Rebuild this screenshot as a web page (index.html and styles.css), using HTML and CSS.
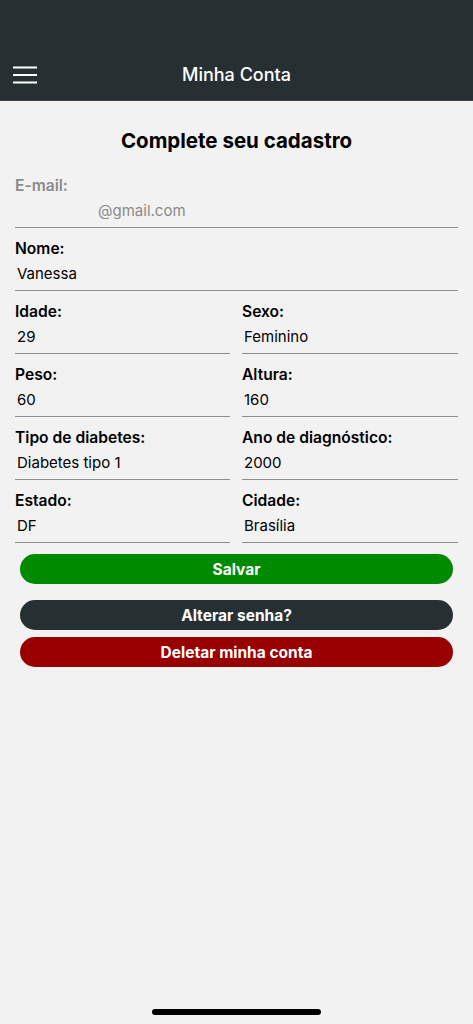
FILE: index.html
```html
<!DOCTYPE html>
<html lang="pt-BR">
<head>
<meta charset="utf-8">
<title>Minha Conta</title>
<link rel="stylesheet" href="styles.css">
</head>
<body>
<header class="topbar">
  <div class="topbar-row">
    <button class="menu-btn" aria-label="Menu">
      <svg width="24" height="18" viewBox="0 0 24 18"><path d="M0 1.5H24M0 9H24M0 16.5H24" stroke="#fff" stroke-width="2.2" stroke-linecap="round" fill="none"/></svg>
    </button>
    <h1 class="topbar-title">Minha Conta</h1>
  </div>
</header>
<main class="form">
  <h2 class="form-title">Complete seu cadastro</h2>
  <div class="field disabled">
    <div class="label">E-mail:</div>
    <div class="value email">@gmail.com</div>
  </div>
  <div class="field">
    <div class="label">Nome:</div>
    <div class="value">Vanessa</div>
  </div>
  <div class="grid">
    <div class="field"><div class="label">Idade:</div><div class="value">29</div></div>
    <div class="field"><div class="label">Sexo:</div><div class="value">Feminino</div></div>
    <div class="field"><div class="label">Peso:</div><div class="value">60</div></div>
    <div class="field"><div class="label">Altura:</div><div class="value">160</div></div>
    <div class="field"><div class="label">Tipo de diabetes:</div><div class="value">Diabetes tipo 1</div></div>
    <div class="field"><div class="label">Ano de diagnóstico:</div><div class="value">2000</div></div>
    <div class="field"><div class="label">Estado:</div><div class="value">DF</div></div>
    <div class="field"><div class="label">Cidade:</div><div class="value">Brasília</div></div>
  </div>
  <div class="actions">
    <button class="btn btn-save">Salvar</button>
    <div class="secondary">
      <button class="btn btn-dark">Alterar senha?</button>
      <button class="btn btn-danger">Deletar minha conta</button>
    </div>
  </div>
</main>
<div class="home-indicator"></div>
</body>
</html>
```
FILE: styles.css
```css
* { box-sizing: border-box; }
html, body { margin: 0; padding: 0; }
body {
  background: #f2f2f2;
  font-family: Inter, "Noto Sans", "Liberation Sans", sans-serif;
  color: #000;
  width: 473px;
  min-height: 1024px;
}
.topbar {
  height: 101px;
  background: #263033;
  border-bottom: 1px solid #3c4548;
  display: flex;
  align-items: flex-end;
}
.topbar-row {
  height: 44px;
  width: 100%;
  margin-bottom: 3px;
  display: flex;
  align-items: center;
  justify-content: center;
  position: relative;
}
.menu-btn {
  position: absolute;
  left: 13px;
  top: 13px;
  width: 24px;
  height: 18px;
  padding: 0;
  border: 0;
  background: none;
  display: block;
}
.menu-btn svg { display: block; }
.topbar-title {
  margin: 0;
  color: #fff;
  font-size: 18px;
  font-weight: 500;
  line-height: 24px;
}
.form { padding: 26px 15px 0; }
.form-title {
  margin: 0 0 10px;
  text-align: center;
  font-size: 20.5px;
  font-weight: 700;
  line-height: 28px;
}
.field {
  padding: 11px 0 4px;
  border-bottom: 1px solid #8e8e8e;
}
.label {
  font-size: 15.6px;
  font-weight: 600;
  line-height: 20px;
}
.value {
  margin-top: 3px;
  padding-left: 2px;
  font-size: 15px;
  line-height: 24px;
}
.disabled .label { color: #8a8a8a; }
.value.email { color: #8a8a8a; padding-left: 83px; }
.grid {
  display: grid;
  grid-template-columns: 215px 216px;
  column-gap: 12px;
}
.actions { padding: 11px 5px 0; }
.btn {
  display: block;
  width: 100%;
  height: 30px;
  border: 0;
  border-radius: 15px;
  color: #fff;
  font-family: inherit;
  font-size: 15.5px;
  font-weight: 700;
  padding: 0;
}
.btn-save { background: #008a00; }
.secondary {
  margin-top: 16px;
  display: flex;
  flex-direction: column;
  gap: 7px;
}
.btn-dark { background: #263033; }
.btn-danger { background: #990000; }
.home-indicator {
  position: fixed;
  left: 152px;
  bottom: 9px;
  width: 169px;
  height: 6px;
  border-radius: 3px;
  background: #000;
}
```
